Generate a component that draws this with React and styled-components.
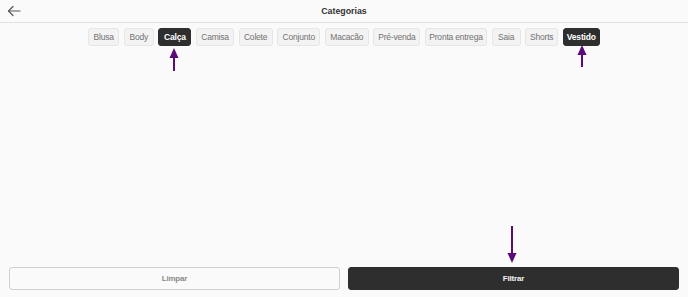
import React from 'react';
import styled, { createGlobalStyle } from 'styled-components';

const GlobalStyle = createGlobalStyle`
  html, body {
    margin: 0;
    padding: 0;
    background: #fafafa;
  }
  body {
    font-family: "Liberation Sans", Arial, sans-serif;
  }
`

const Page = styled.div`
  position: relative;
  width: 688px;
  height: 297px;
  display: flex;
  flex-direction: column;
  background: #fafafa;
  overflow: hidden;
`

const Header = styled.header`
  position: relative;
  height: 22px;
  flex: none;
  display: flex;
  align-items: center;
  justify-content: center;
  border-bottom: 1px solid #e2e2e2;
`

const BackButton = styled.button`
  position: absolute;
  left: 7px;
  top: 5px;
  padding: 0;
  border: 0;
  background: none;
  display: flex;
  color: #555;
`

const Title = styled.h1`
  margin: 0;
  font-size: 8.8px;
  font-weight: 600;
  color: #333;
`

const Chips = styled.div`
  display: flex;
  justify-content: center;
  gap: 4.6px;
  margin-top: 5px;
`

const Chip = styled.button`
  flex: none;
  width: ${p => p.$w}px;
  height: 18px;
  padding: 0;
  border-radius: 3px;
  font-family: inherit;
  font-size: 8.5px;
  letter-spacing: -0.2px;
  border: 1px solid ${p => (p.$active ? '#2e2e2e' : '#e6e6e6')};
  background: ${p => (p.$active ? '#2e2e2e' : '#f3f3f3')};
  color: ${p => (p.$active ? '#fff' : '#727272')};
  font-weight: ${p => (p.$active ? 600 : 400)};
  white-space: nowrap;
`

const Spacer = styled.div`
  flex: 1;
`

const Actions = styled.div`
  display: flex;
  gap: 8px;
  padding: 0 9px 7px;
`

const ActionButton = styled.button`
  flex: 1;
  height: 23px;
  border-radius: 3px;
  font-family: inherit;
  font-size: 8px;
  font-weight: 700;
  letter-spacing: -0.2px;
  border: 1px solid ${p => (p.$primary ? '#2e2e2e' : '#cfcfcf')};
  background: ${p => (p.$primary ? '#2e2e2e' : '#fafafa')};
  color: ${p => (p.$primary ? '#f2f2f2' : '#8a8a8a')};
`

const Marker = styled.svg`
  position: absolute;
  left: ${p => p.$x}px;
  top: ${p => p.$y}px;
  overflow: visible;
`

const categories = [
  ['Blusa', 31], ['Body', 30], ['Calça', 33], ['Camisa', 38], ['Colete', 34],
  ['Conjunto', 43], ['Macacão', 44], ['Pré-venda', 47], ['Pronta entrega', 62],
  ['Saia', 29], ['Shorts', 33], ['Vestido', 37],
];
const selected = ['Calça', 'Vestido'];

const UpArrow = ({ x, y, h }) => (
  <Marker $x={x} $y={y} width="10" height={h} viewBox={`0 0 10 ${h}`}>
    <path d={`M5 9 V${h}`} stroke="#5c0a7a" strokeWidth="2" fill="none" />
    <path d="M5 0 L9.5 10 H0.5 Z" fill="#5c0a7a" />
  </Marker>
);

const DownArrow = ({ x, y, h }) => (
  <Marker $x={x} $y={y} width="10" height={h} viewBox={`0 0 10 ${h}`}>
    <path d={`M5 0 V${h - 9}`} stroke="#5c0a7a" strokeWidth="2" fill="none" />
    <path d={`M5 ${h} L9.5 ${h - 10} H0.5 Z`} fill="#5c0a7a" />
  </Marker>
);

export default function App() {
  return (
    <Page>
      <GlobalStyle />
      <Header>
        <BackButton aria-label="Voltar">
          <svg width="14" height="12" viewBox="0 0 14 12" fill="none" stroke="#555" strokeWidth="1.2" strokeLinecap="round" strokeLinejoin="round">
            <path d="M13 6 H1.5" />
            <path d="M6 1.5 L1.5 6 L6 10.5" />
          </svg>
        </BackButton>
        <Title>Categorias</Title>
      </Header>

      <Chips>
        {categories.map(([c, w]) => (
          <Chip key={c} $w={w} $active={selected.includes(c)}>{c}</Chip>
        ))}
      </Chips>

      <Spacer />

      <Actions>
        <ActionButton>Limpar</ActionButton>
        <ActionButton $primary>Filtrar</ActionButton>
      </Actions>

      <UpArrow x={169} y={48} h={23} />
      <UpArrow x={577} y={45} h={22} />
      <DownArrow x={507} y={226} h={37} />
    </Page>
  );
}
